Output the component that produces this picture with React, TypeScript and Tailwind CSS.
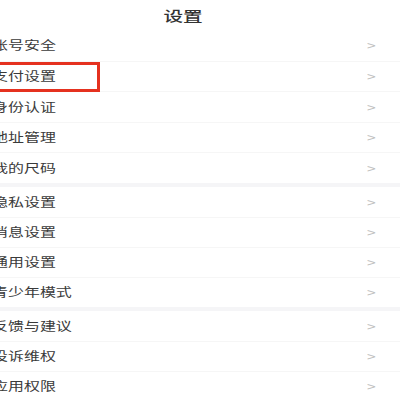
import { Fragment } from 'react';

const groups: string[][] = [
  ['账号安全', '支付设置', '身份认证', '地址管理', '我的尺码'],
  ['隐私设置', '消息设置', '通用设置', '青少年模式'],
  ['反馈与建议', '投诉维权', '应用权限'],
];

function Row({ label, tall, divider }: { label: string; tall?: boolean; divider?: boolean }) {
  return (
    <div
      className={`flex items-center justify-between pr-[25px] ${tall ? 'h-[30.5px]' : 'h-[30px]'} ${
        divider ? 'border-t border-[#f6f6f6]' : ''
      }`}
    >
      <span className="ml-[-8px] inline-block origin-left scale-x-[1.33] text-[12px] leading-none text-[#3a3a3a]">
        {label}
      </span>
      <span className="inline-block scale-x-[1.3] text-[12px] leading-none text-[#c0c0c0]">&gt;</span>
    </div>
  );
}

export default function App() {
  return (
    <div
      className="relative h-[400px] w-[400px] overflow-hidden bg-white"
      style={{ fontFamily: '"Noto Sans CJK SC", "Noto Sans", sans-serif' }}
    >
      <div className="flex h-[30px] items-center justify-center">
        <span className="ml-[-34px] inline-block scale-x-[1.4] text-[14px] font-medium leading-none text-[#333]">
          设置
        </span>
      </div>

      {groups.map((items, gi) => (
        <Fragment key={gi}>
          {gi > 0 && <div className="h-[4px] bg-[#f5f5f7]" />}
          <div className="flex flex-col">
            {items.map((label, i) => (
              <Row key={label} label={label} tall={gi === 0} divider={i > 0} />
            ))}
          </div>
        </Fragment>
      ))}

      {/* highlight around the payment row */}
      <div className="absolute left-[-10px] top-[62px] h-[30px] w-[110px] border-[3px] border-[#e5311f]" />
    </div>
  );
}
